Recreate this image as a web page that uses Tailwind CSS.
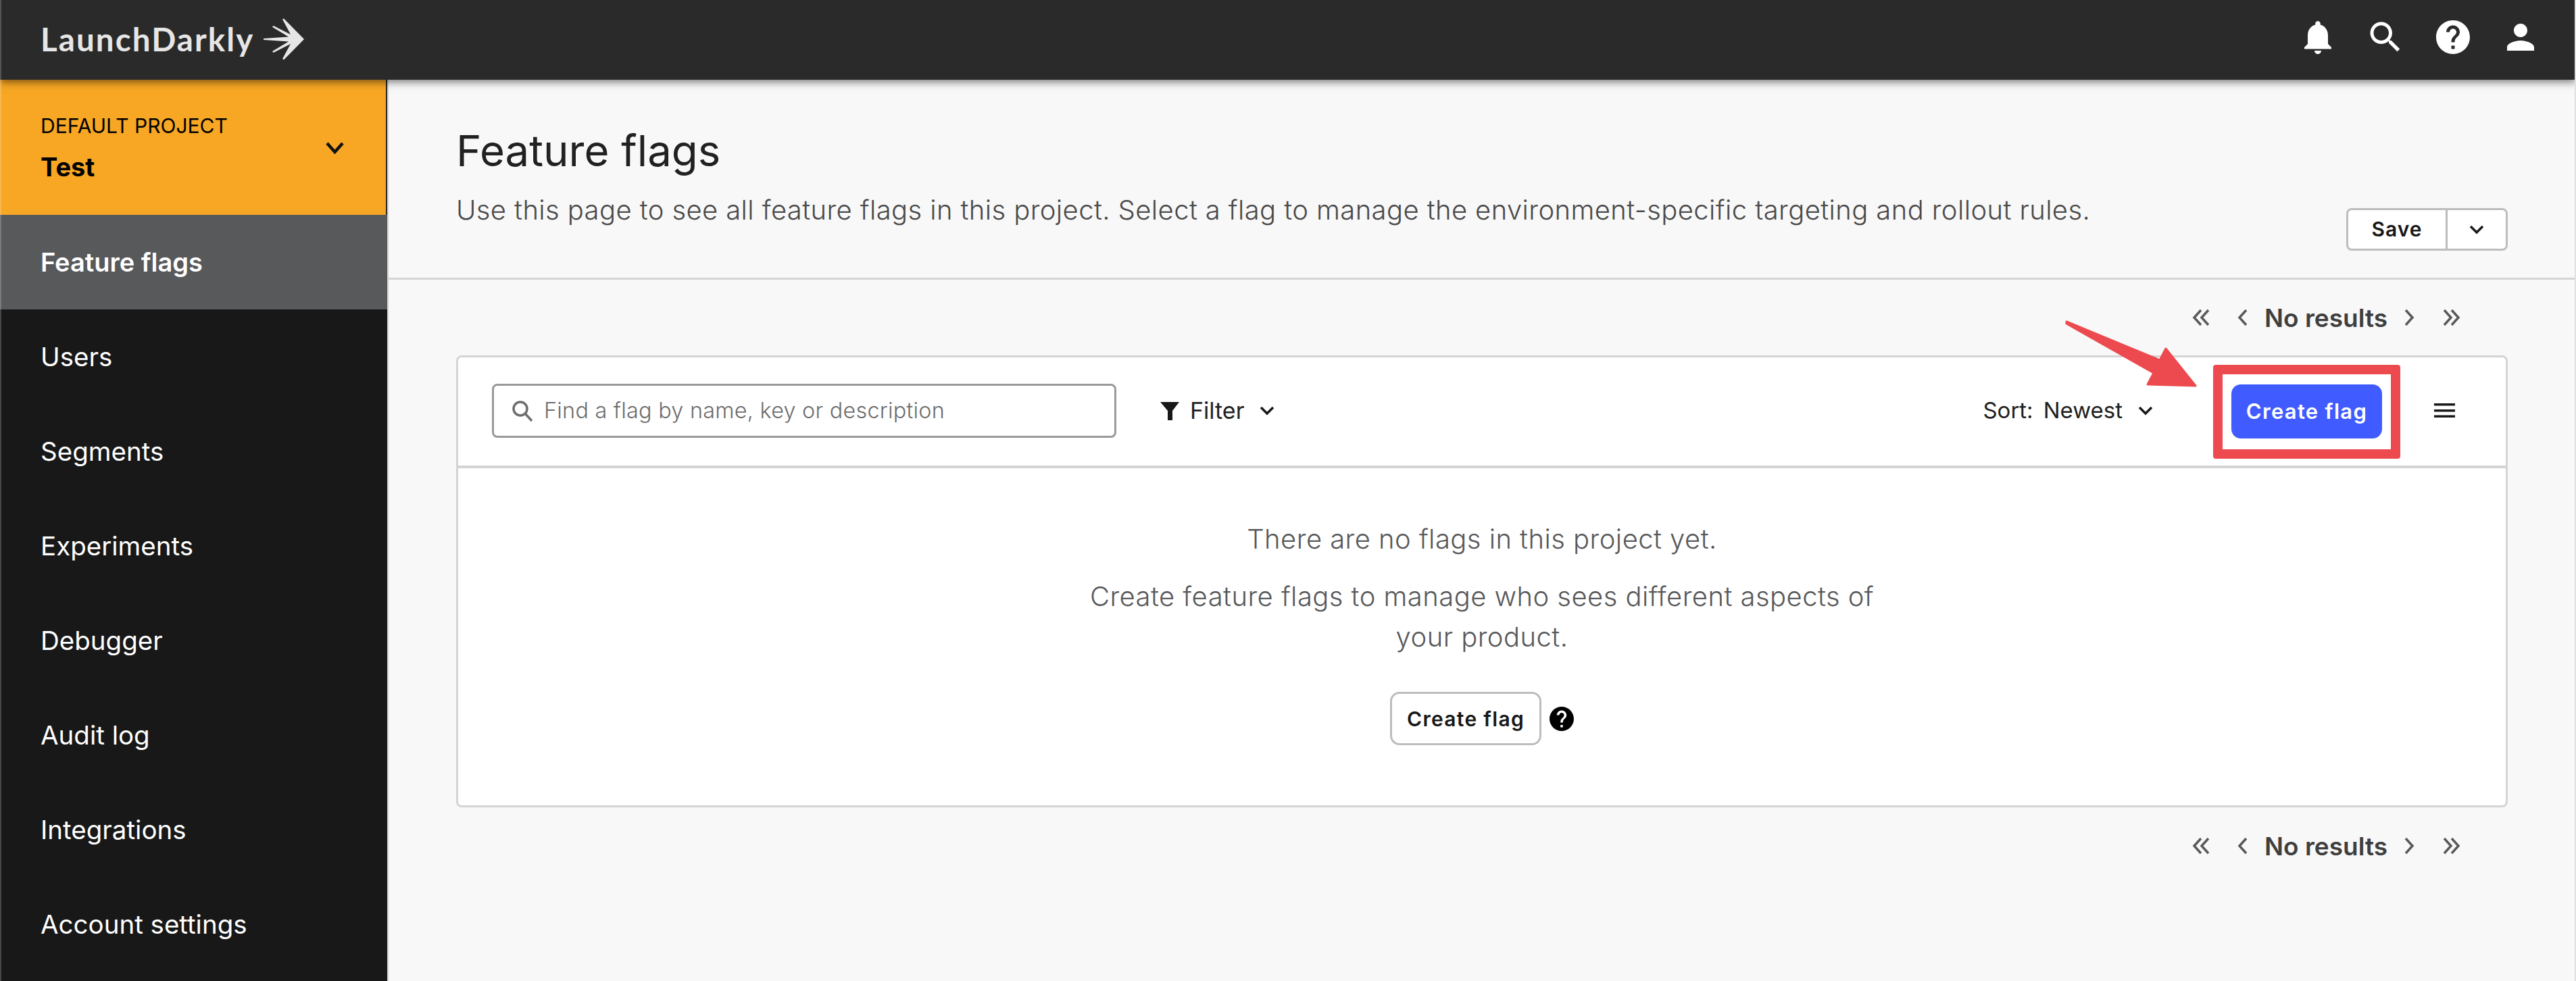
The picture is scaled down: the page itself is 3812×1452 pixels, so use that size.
<!DOCTYPE html>
<html lang="en">
<head>
<meta charset="UTF-8" />
<title>Feature flags</title>
<script src="https://cdn.jsdelivr.net/npm/@tailwindcss/browser@4"></script>
</head>
<body class="relative w-full h-screen overflow-hidden flex flex-col bg-[#f8f8f8] font-[Inter,sans-serif]">
  <!-- top bar -->
  <header class="relative z-10 h-[118px] shrink-0 flex items-center justify-between bg-[#2a2a2a] pl-[60px] pr-[52px] shadow-[0_3px_12px_rgba(0,0,0,0.55)]">
    <div class="flex items-center gap-[13px] -mt-[2px]">
      <span class="font-[Lato,sans-serif] font-bold text-[47.5px] tracking-[2.1px] leading-none text-[#e6e6e6]">LaunchDarkly</span>
      <svg class="w-[62px] h-[62px]" viewBox="0 0 62 62" fill="#e6e6e6"><path d="M1 30 L38 27.5 L14 13 L15.5 11 L41 24 L29 1.5 L31 0.5 L61 31 L31 61.5 L29 60 L41 38 L15.5 51 L14 49 L38 34.5 L1 32 Z"/></svg>
    </div>
    <div class="flex items-center gap-[40px] -mt-[8px] text-white">
      <svg class="w-[60px] h-[60px]" viewBox="0 0 24 24" fill="currentColor"><path d="M12 22c1.1 0 2-.9 2-2h-4c0 1.1.89 2 2 2zm6-6v-5c0-3.07-1.64-5.64-4.5-6.32V4c0-.83-.67-1.5-1.5-1.5s-1.5.67-1.5 1.5v.68C7.63 5.36 6 7.92 6 11v5l-2 2v1h16v-1l-2-2z"/></svg>
      <svg class="w-[60px] h-[60px]" viewBox="0 0 24 24" fill="currentColor"><path d="M15.5 14h-.79l-.28-.27C15.41 12.59 16 11.11 16 9.5 16 5.91 13.09 3 9.5 3S3 5.91 3 9.5 5.91 16 9.5 16c1.61 0 3.09-.59 4.23-1.57l.27.28v.79l5 4.99L20.49 19l-4.99-5zm-6 0C7.01 14 5 11.99 5 9.5S7.01 5 9.5 5 14 7.01 14 9.5 11.99 14 9.5 14z"/></svg>
      <svg class="w-[60px] h-[60px]" viewBox="0 0 24 24" fill="currentColor"><path d="M12 2C6.48 2 2 6.48 2 12s4.48 10 10 10 10-4.48 10-10S17.52 2 12 2zm1 17h-2v-2h2v2zm2.07-7.75l-.9.92C13.45 12.9 13 13.5 13 15h-2v-.5c0-1.1.45-2.1 1.17-2.83l1.24-1.26c.37-.36.59-.86.59-1.41 0-1.1-.9-2-2-2s-2 .9-2 2H8c0-2.21 1.79-4 4-4s4 1.79 4 4c0 .88-.36 1.68-.93 2.25z"/></svg>
      <svg class="w-[60px] h-[60px]" viewBox="0 0 24 24" fill="currentColor"><path d="M12 12c2.21 0 4-1.79 4-4s-1.79-4-4-4-4 1.79-4 4 1.79 4 4 4zm0 2c-2.67 0-8 1.34-8 4v2h16v-2c0-2.66-5.33-4-8-4z"/></svg>
    </div>
  </header>

  <div class="flex flex-1 min-h-0">
    <!-- sidebar -->
    <aside class="w-[575px] shrink-0 bg-[#181818] flex flex-col text-white text-[38.5px] border-r-2 border-[#d4d4d4]">
      <div class="h-[200px] shrink-0 bg-[#f7a724] flex items-center justify-between pl-[60px] pr-[62px] border-r-2 border-[#2a2a2a] text-black">
        <div class="flex flex-col">
          <span class="text-[30px] leading-[46px] -mt-[2px]">DEFAULT PROJECT</span>
          <span class="text-[38px] leading-[50px] mt-[13px] font-bold">Test</span>
        </div>
        <svg class="w-[27px] h-[18px] mt-[2px]" viewBox="0 0 27 18" fill="none" stroke="#111" stroke-width="4.5"><path d="M2 2 L13.5 15 L25 2"/></svg>
      </div>
      <a class="h-[140px] shrink-0 flex items-center pl-[60px] bg-[#58595b] font-semibold text-[38px]">Feature flags</a>
      <a class="h-[140px] shrink-0 flex items-center pl-[60px] pt-[2px]">Users</a>
      <a class="h-[140px] shrink-0 flex items-center pl-[60px] pt-[2px]">Segments</a>
      <a class="h-[140px] shrink-0 flex items-center pl-[60px] pt-[2px]">Experiments</a>
      <a class="h-[140px] shrink-0 flex items-center pl-[60px] pt-[2px]">Debugger</a>
      <a class="h-[140px] shrink-0 flex items-center pl-[60px] pt-[2px]">Audit log</a>
      <a class="h-[140px] shrink-0 flex items-center pl-[60px] pt-[2px]">Integrations</a>
      <a class="h-[140px] shrink-0 flex items-center pl-[60px] pt-[2px]">Account settings</a>
    </aside>

    <!-- main -->
    <main class="flex-1 min-w-0 flex flex-col">
      <div class="h-[296px] shrink-0 border-b-[3px] border-[#d4d4d4] pl-[100px] pr-[101px] pt-[65px] relative">
        <h1 class="text-[63.5px] leading-[80px] text-[#212121] font-normal">Feature flags</h1>
        <div class="flex justify-between">
          <p class="text-[40px] leading-[60px] mt-[18px] text-[#4a4a4a] font-[350] tracking-[0.39px]">Use this page to see all feature flags in this project. Select a flag to manage the environment-specific targeting and rollout rules.</p>
        </div>
        <div class="absolute right-[101px] top-[190px] h-[63px] w-[239px] flex bg-white border-[3px] border-[#bdbdbd] rounded-[8px]">
          <span class="w-[147px] flex items-center justify-center border-r-[3px] border-[#bdbdbd] text-[30px] font-semibold tracking-[1px] text-[#181818]">Save</span>
          <span class="flex-1 flex items-center justify-center">
            <svg class="w-[22px] h-[14px]" viewBox="0 0 22 14" fill="none" stroke="#181818" stroke-width="3.5"><path d="M2 2 L11 11 L20 2"/></svg>
          </span>
        </div>
      </div>

      <div class="flex flex-col pl-[100px] pr-[101px]">
        <!-- pagination -->
        <div class="h-[112px] flex items-center justify-end pr-[70px] text-[#3f3f3f] text-[37px] font-semibold">
          <svg class="w-[26px] h-[28px]" viewBox="0 0 26 28" fill="none" stroke="#58595b" stroke-width="3.5"><path d="M13 3 L3 14 L13 25 M24 3 L14 14 L24 25"/></svg>
          <svg class="w-[15px] h-[28px] ml-[41px]" viewBox="0 0 15 28" fill="none" stroke="#58595b" stroke-width="3.5"><path d="M13 3 L3 14 L13 25"/></svg>
          <span class="ml-[25px] leading-none">No results</span>
          <svg class="w-[15px] h-[28px] ml-[25px]" viewBox="0 0 15 28" fill="none" stroke="#58595b" stroke-width="3.5"><path d="M2 3 L12 14 L2 25"/></svg>
          <svg class="w-[26px] h-[28px] ml-[42px]" viewBox="0 0 26 28" fill="none" stroke="#58595b" stroke-width="3.5"><path d="M2 3 L12 14 L2 25 M13 3 L23 14 L13 25"/></svg>
        </div>

        <!-- card -->
        <div class="h-[669px] bg-white border-[3px] border-[#d4d4d4] rounded-[8px] flex flex-col">
          <div class="h-[164px] shrink-0 flex items-center pl-[50px] pr-[75px] pb-[3px] border-b-[4px] border-[#d4d4d4] text-[34px] text-[#212121]">
            <div class="w-[924px] h-[80px] mt-[1px] shrink-0 flex items-center border-[3px] border-[#999999] rounded-[8px] pl-[26px] text-[#6d6d6d]">
              <svg class="w-[32px] h-[32px] shrink-0" viewBox="0 0 32 32" fill="none" stroke="#6d6d6d" stroke-width="3.5"><circle cx="13" cy="13" r="10"/><path d="M20 20 L30 31"/></svg>
              <span class="ml-[16px] text-[32.4px] font-[350] tracking-[0.24px]">Find a flag by name, key or description</span>
            </div>
            <svg class="w-[28px] h-[28px] ml-[65px]" viewBox="0 0 28 28" fill="#181818"><path d="M0 1 H28 L18 14 V28 H11 V14 Z"/></svg>
            <span class="ml-[16px]">Filter</span>
            <svg class="w-[22px] h-[14px] ml-[23px]" viewBox="0 0 22 14" fill="none" stroke="#181818" stroke-width="3.5"><path d="M2 2 L11 11 L20 2"/></svg>
            <span class="ml-auto text-[33px]">Sort:</span>
            <span class="ml-[15px] text-[33px]">Newest</span>
            <svg class="w-[22px] h-[14px] ml-[23px]" viewBox="0 0 22 14" fill="none" stroke="#181818" stroke-width="3.5"><path d="M2 2 L11 11 L20 2"/></svg>
            <div class="ml-[89px] mt-[3px] w-[277px] h-[139px] shrink-0 border-[14px] border-[#ec4a4f] rounded-[4px] flex items-center justify-center">
              <span class="w-[223px] h-[80px] rounded-[14px] bg-[#405bff] flex items-center justify-center text-white text-[31px] font-semibold tracking-[1.3px]">Create flag</span>
            </div>
            <svg class="w-[31px] h-[21px] ml-[50px]" viewBox="0 0 31 21" fill="#181818"><path d="M0 0 H31 V3.5 H0 Z M0 9 H31 V12.5 H0 Z M0 17.5 H31 V21 H0 Z"/></svg>
          </div>
          <div class="flex-1 flex flex-col items-center pt-[75px] text-[40px] leading-[60px] text-[#58595b] text-center font-[350] tracking-[0.44px]">
            <p>There are no flags in this project yet.</p>
            <p class="mt-[25px] max-w-[1200px]">Create feature flags to manage who sees different aspects of your product.</p>
            <div class="mt-[51px] flex items-center">
              <span class="w-[224px] h-[79px] bg-white border-[3px] border-[#bdbdbd] rounded-[14px] flex items-center justify-center text-[30px] leading-none font-semibold tracking-[1.3px] text-[#181818]">Create flag</span>
              <svg class="w-[36px] h-[36px] ml-[12px]" viewBox="2 2 20 20" fill="#000"><path d="M12 2C6.48 2 2 6.48 2 12s4.48 10 10 10 10-4.48 10-10S17.52 2 12 2zm1 17h-2v-2h2v2zm2.07-7.75l-.9.92C13.45 12.9 13 13.5 13 15h-2v-.5c0-1.1.45-2.1 1.17-2.83l1.24-1.26c.37-.36.59-.86.59-1.41 0-1.1-.9-2-2-2s-2 .9-2 2H8c0-2.21 1.79-4 4-4s4 1.79 4 4c0 .88-.36 1.68-.93 2.25z"/></svg>
            </div>
          </div>
        </div>

        <!-- pagination bottom -->
        <div class="h-[114px] flex items-center justify-end pr-[70px] text-[#3f3f3f] text-[37px] font-semibold">
          <svg class="w-[26px] h-[28px]" viewBox="0 0 26 28" fill="none" stroke="#58595b" stroke-width="3.5"><path d="M13 3 L3 14 L13 25 M24 3 L14 14 L24 25"/></svg>
          <svg class="w-[15px] h-[28px] ml-[41px]" viewBox="0 0 15 28" fill="none" stroke="#58595b" stroke-width="3.5"><path d="M13 3 L3 14 L13 25"/></svg>
          <span class="ml-[25px] leading-none">No results</span>
          <svg class="w-[15px] h-[28px] ml-[25px]" viewBox="0 0 15 28" fill="none" stroke="#58595b" stroke-width="3.5"><path d="M2 3 L12 14 L2 25"/></svg>
          <svg class="w-[26px] h-[28px] ml-[42px]" viewBox="0 0 26 28" fill="none" stroke="#58595b" stroke-width="3.5"><path d="M2 3 L12 14 L2 25 M13 3 L23 14 L13 25"/></svg>
        </div>
      </div>
    </main>
  </div>

  <!-- annotation arrow, drawn over the page -->
  <svg class="absolute left-[3040px] top-[460px] w-[230px] h-[130px] z-20" viewBox="3040 460 230 130" fill="#ec4a4f" stroke="#ec4a4f" stroke-width="3" stroke-linejoin="round"><path d="M3058 476 L3196 533 L3205 516 L3249 571 L3178 569 L3187 552 L3058 479 Z"/></svg>
  <!-- thin window edges of the screenshot -->
  <div class="absolute left-0 top-0 bottom-0 w-[2px] z-20 bg-white/20"></div>
  <div class="absolute right-0 top-0 bottom-0 w-[2px] z-20 bg-[#e0e0e0]"></div>
</body>
</html>
